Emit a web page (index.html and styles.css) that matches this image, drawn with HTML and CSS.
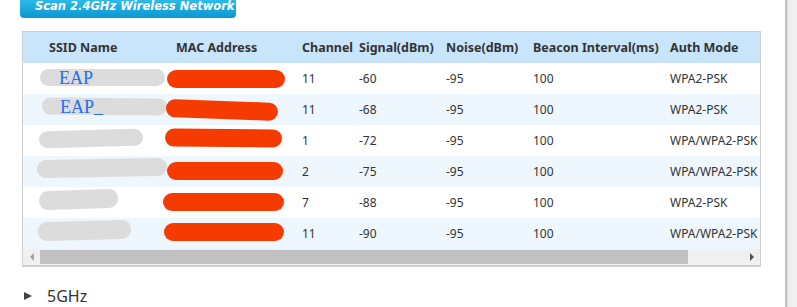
FILE: index.html
```html
<!DOCTYPE html>
<html>
<head>
<meta charset="utf-8">
<link rel="stylesheet" href="styles.css">
</head>
<body>
<div class="page">
  <div class="scan-btn">Scan 2.4GHz Wireless Network</div>
  <div class="table-box">
    <div class="table-clip">
      <table class="wlan">
        <thead>
          <tr>
            <th class="c1">SSID Name</th>
            <th class="c2">MAC Address</th>
            <th class="c3">Channel</th>
            <th class="c4">Signal(dBm)</th>
            <th class="c5">Noise(dBm)</th>
            <th class="c6">Beacon Interval(ms)</th>
            <th class="c7">Auth Mode</th>
          </tr>
        </thead>
        <tbody>
          <tr>
            <td class="c1"><span class="gray-pill p1"></span><span class="eap e1">EAP</span></td>
            <td class="c2"><span class="red-pill m1"></span></td>
            <td>11</td><td>-60</td><td>-95</td><td>100</td><td>WPA2-PSK</td>
          </tr>
          <tr class="alt">
            <td class="c1"><span class="gray-pill p2"></span><span class="eap e2">EAP_</span></td>
            <td class="c2"><span class="red-pill m2"></span></td>
            <td>11</td><td>-68</td><td>-95</td><td>100</td><td>WPA2-PSK</td>
          </tr>
          <tr>
            <td class="c1"><span class="gray-pill p3"></span></td>
            <td class="c2"><span class="red-pill m3"></span></td>
            <td>1</td><td>-72</td><td>-95</td><td>100</td><td>WPA/WPA2-PSK</td>
          </tr>
          <tr class="alt">
            <td class="c1"><span class="gray-pill p4"></span></td>
            <td class="c2"><span class="red-pill m4"></span></td>
            <td>2</td><td>-75</td><td>-95</td><td>100</td><td>WPA/WPA2-PSK</td>
          </tr>
          <tr>
            <td class="c1"><span class="gray-pill p5"></span></td>
            <td class="c2"><span class="red-pill m5"></span></td>
            <td>7</td><td>-88</td><td>-95</td><td>100</td><td>WPA2-PSK</td>
          </tr>
          <tr class="alt">
            <td class="c1"><span class="gray-pill p6"></span></td>
            <td class="c2"><span class="red-pill m6"></span></td>
            <td>11</td><td>-90</td><td>-95</td><td>100</td><td>WPA/WPA2-PSK</td>
          </tr>
        </tbody>
      </table>
    </div>
    <div class="hscroll">
      <div class="arrow-left"></div>
      <div class="track"><div class="thumb"></div></div>
      <div class="arrow-right"></div>
    </div>
  </div>
  <div class="band">
    <span class="tri"></span>
    <span class="band-label">5GHz</span>
  </div>
</div>
<div class="vscroll"></div>
</body>
</html>
```

FILE: styles.css
```css
html, body {
  margin: 0;
  padding: 0;
  background: #fff;
  height: 307px;
  overflow: hidden;
}
body {
  display: flex;
  font-family: "Noto Sans", "Open Sans", sans-serif;
  color: #333;
}
.page {
  flex: 1;
  min-width: 0;
}
.vscroll {
  width: 10px;
  border-left: 2px solid #c4c4c4;
  box-shadow: inset 1px 0 0 #dadada;
  background: #f0f0f0;
  height: 307px;
}
.scan-btn {
  margin-left: 20px;
  width: 216px;
  height: 18px;
  box-sizing: border-box;
  border-radius: 0 0 4px 4px;
  background: linear-gradient(#2cb9ea, #0a98d0);
  color: #fff;
  font-family: "DejaVu Sans", sans-serif;
  font-weight: bold;
  font-style: italic;
  font-size: 11.5px;
  line-height: 13px;
  padding-left: 15px;
  white-space: nowrap;
}
.table-box {
  margin-top: 13px;
  margin-left: 22px;
  width: 739px;
  box-sizing: border-box;
  border: 1px solid #cfcfcf;
  border-bottom-width: 2px;
}
.table-clip {
  overflow: hidden;
}
.wlan {
  border-collapse: collapse;
  table-layout: fixed;
  width: 780px;
  font-size: 12px;
}
.wlan th, .wlan td {
  height: 31px;
  padding: 0;
  text-align: left;
  white-space: nowrap;
  vertical-align: middle;
}
.wlan thead tr {
  background: #c8e5fc;
}
.wlan th {
  font-weight: bold;
  font-size: 12.5px;
}
.wlan .c1 { width: 153px; padding-left: 26px; box-sizing: border-box; position: relative; }
.wlan .c2 { width: 126px; position: relative; }
.wlan .c3 { width: 57px; }
.wlan .c4 { width: 87px; }
.wlan .c5 { width: 87px; }
.wlan .c6 { width: 137px; }
.wlan td.c1 { padding-left: 0; }
.wlan tbody tr.alt {
  background: #eef6fe;
}
.gray-pill {
  position: absolute;
  background: #dcdcdc;
  border-radius: 9px;
  height: 17px;
}
.red-pill {
  position: absolute;
  background: #f63b00;
  border-radius: 9px;
  height: 18px;
}
.p1 { left: 17px; top: 6px; width: 125px; }
.p2 { left: 19px; top: 4px; width: 125px; transform: rotate(0.5deg); }
.p3 { left: 16px; top: 5px; width: 104px; transform: rotate(-1.5deg); }
.p4 { left: 14px; top: 3px; width: 130px; height: 18px; transform: rotate(-1deg); }
.p5 { left: 16px; top: 3px; width: 79px; height: 19px; transform: rotate(-2deg); }
.p6 { left: 15px; top: 3px; width: 93px; height: 19px; transform: rotate(-1.5deg); }
.m1 { left: -9px; top: 7px; width: 118px; }
.m2 { left: -10px; top: 7px; width: 112px; transform: rotate(2deg); }
.m3 { left: -11px; top: 4px; width: 117px; transform: rotate(0.5deg); }
.m4 { left: -9px; top: 6px; width: 116px; }
.m5 { left: -13px; top: 6px; width: 121px; }
.m6 { left: -12px; top: 5px; width: 120px; }
.eap {
  position: absolute;
  font-family: "Liberation Serif", "DejaVu Serif", serif;
  font-size: 18px;
  line-height: 20px;
  color: #1f6ff0;
  top: 5px;
}
.e1 { left: 36px; }
.e2 { left: 37px; top: 3px; }
.hscroll {
  display: flex;
  height: 16px;
  background: #f0f0f0;
  align-items: center;
}
.arrow-left {
  width: 17px;
  display: flex;
  justify-content: center;
}
.arrow-left::before {
  content: "";
  border-right: 4px solid #a3a3a3;
  border-top: 4px solid transparent;
  border-bottom: 4px solid transparent;
}
.track {
  flex: 1;
  height: 14px;
  display: flex;
}
.thumb {
  width: 648px;
  background: #c1c1c1;
}
.arrow-right {
  width: 17px;
  display: flex;
  justify-content: center;
}
.arrow-right::before {
  content: "";
  border-left: 4px solid #505050;
  border-top: 4px solid transparent;
  border-bottom: 4px solid transparent;
}
.band {
  margin-top: 20px;
  margin-left: 24px;
  display: flex;
  align-items: center;
  gap: 15px;
  height: 18px;
}
.tri {
  width: 0;
  height: 0;
  border-left: 8px solid #444;
  border-top: 4.5px solid transparent;
  border-bottom: 4.5px solid transparent;
}
.band-label {
  font-size: 16px;
  line-height: 18px;
  color: #333;
}
```
